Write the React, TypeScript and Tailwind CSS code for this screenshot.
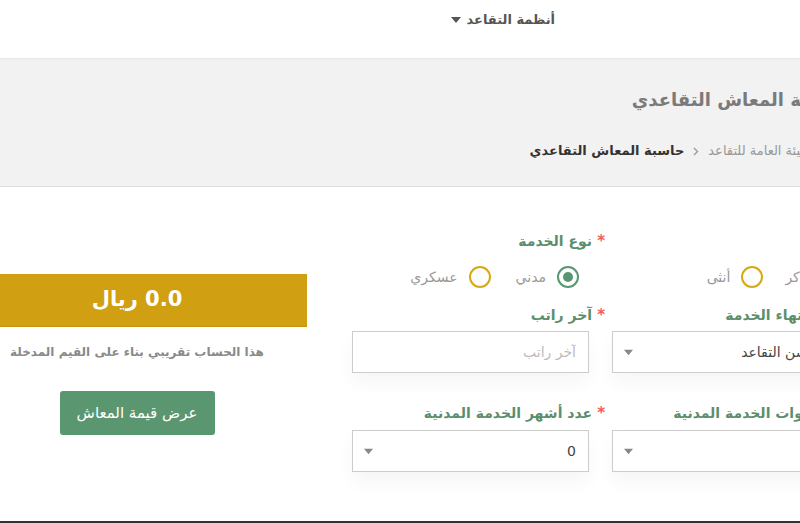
import type { ReactNode } from "react";

function Caret({ className }: { className?: string }) {
  return (
    <svg width="10" height="6" viewBox="0 0 10 6" className={className} fill="currentColor">
      <path d="M0 0h10L5 6z" />
    </svg>
  );
}

function Field({ label, children, gap }: { label: string; children: ReactNode; gap: string }) {
  return (
    <div>
      <div className="h-[20px] leading-[20px] flex items-center gap-[5px] text-[14px] font-bold text-[#5b8f6c]">
        <span className="text-[#f15b5b] text-[15px]">*</span>
        <span>{label}</span>
      </div>
      <div className={`mr-[16px] ${gap}`}>{children}</div>
    </div>
  );
}

function Radio({ label, checked }: { label: string; checked?: boolean }) {
  return (
    <label className="flex items-center gap-[11px]">
      <span
        className={`w-[22px] h-[22px] rounded-full border-2 flex items-center justify-center ${
          checked ? "border-[#5a9671]" : "border-[#d6a914]"
        }`}
      >
        {checked && <span className="w-[10px] h-[10px] rounded-full bg-[#5a9671]" />}
      </span>
      <span className="text-[14px] text-[#999]">{label}</span>
    </label>
  );
}

function Select({ value }: { value: string }) {
  return (
    <div className="h-[42px] border border-[#ccc] bg-white flex items-center justify-between pr-3 pl-[11px] shadow-[0_10px_18px_rgba(0,0,0,0.04)]">
      <span className="text-[14px] text-[#444]">{value}</span>
      <Caret className="text-[#888] w-[9px] h-[7px]" />
    </div>
  );
}

export default function App() {
  return (
    <div dir="rtl" className="w-[800px] h-[523px] overflow-hidden bg-white font-['DejaVu_Sans',sans-serif]">
      {/* top nav */}
      <header className="h-[58px] bg-white relative shadow-[0_1px_2px_rgba(0,0,0,0.05)]">
        <div className="w-[1100px] -mr-[65px] pt-[10px]">
          <nav className="mr-[310px] flex items-center gap-[6px] h-[20px] text-[13px] font-bold text-[#555]">
            <span>أنظمة التقاعد</span>
            <Caret className="text-[#555]" />
          </nav>
        </div>
      </header>

      {/* page title + breadcrumb */}
      <section className="h-[129px] bg-[#f2f2f2] border-b border-[#ddd]">
        <div className="w-[1100px] -mr-[65px] pt-[27px]">
          <h1 className="pr-[19px] text-[18px] leading-[30px] font-bold text-[#7a7a7a]">حاسبة المعاش التقاعدي</h1>
          <div className="pr-[51px] mt-[26px] h-[20px] flex items-center gap-[9px] text-[13px]">
            <span className="text-[#999]">الهيئة العامة للتقاعد</span>
            <svg width="6" height="9" viewBox="0 0 6 9" fill="none" stroke="#999" strokeWidth="1.3">
              <path d="M1 1l3.5 3.5L1 8" />
            </svg>
            <span className="font-bold text-[#333]">حاسبة المعاش التقاعدي</span>
          </div>
        </div>
      </section>

      {/* calculator */}
      <main className="h-[334px]">
        <div className="w-[1100px] -mr-[65px] flex items-start pt-[44px]">
          <div className="w-[513px] shrink-0 grid grid-cols-[253px_253px] gap-x-[7px]">
            <Field label="الجنس" gap="mt-[15px]">
              <div className="flex items-center gap-[22px] mr-[10px]">
                <Radio label="ذكر" />
                <Radio label="أنثى" />
              </div>
            </Field>
            <Field label="نوع الخدمة" gap="mt-[15px]">
              <div className="flex items-center gap-[25px] mr-[10px]">
                <Radio label="مدني" checked />
                <Radio label="عسكري" />
              </div>
            </Field>

            <div className="col-span-2 grid grid-cols-[253px_253px] gap-x-[7px] mt-[17px]">
              <Field label="سبب انتهاء الخدمة" gap="mt-[6px]">
                <Select value="بلوغ سن التقاعد" />
              </Field>
              <Field label="آخر راتب" gap="mt-[6px]">
                <input
                  placeholder="آخر راتب"
                  className="w-full h-[42px] border border-[#ccc] bg-white px-3 text-[14px] text-[#444] placeholder:text-[#bbb] outline-none shadow-[0_10px_18px_rgba(0,0,0,0.04)]"
                />
              </Field>
            </div>

            <div className="col-span-2 grid grid-cols-[253px_253px] gap-x-[7px] mt-[30px]">
              <Field label="عدد سنوات الخدمة المدنية" gap="mt-[7px]">
                <Select value="" />
              </Field>
              <Field label="عدد أشهر الخدمة المدنية" gap="mt-[7px]">
                <Select value="0" />
              </Field>
            </div>
          </div>

          {/* result */}
          <div className="w-[340px] shrink-0 mr-[45px] mt-[43px] flex flex-col items-center">
            <div className="w-full h-[53px] bg-[#d19f12] border-b border-[#c4940f] flex items-center justify-center text-white text-[21px] font-bold">
              0.0 ريال
            </div>
            <p className="mt-[15px] h-[20px] leading-[20px] text-[12px] font-bold text-[#8a8a8a]">
              هذا الحساب تقريبي بناء على القيم المدخلة
            </p>
            <button className="mt-[29px] w-[155px] h-[44px] rounded-[3px] bg-[#5a9670] text-white text-[15px]">
              عرض قيمة المعاش
            </button>
          </div>
        </div>
      </main>

      <footer className="h-[2px] bg-[#333]" />
    </div>
  );
}
